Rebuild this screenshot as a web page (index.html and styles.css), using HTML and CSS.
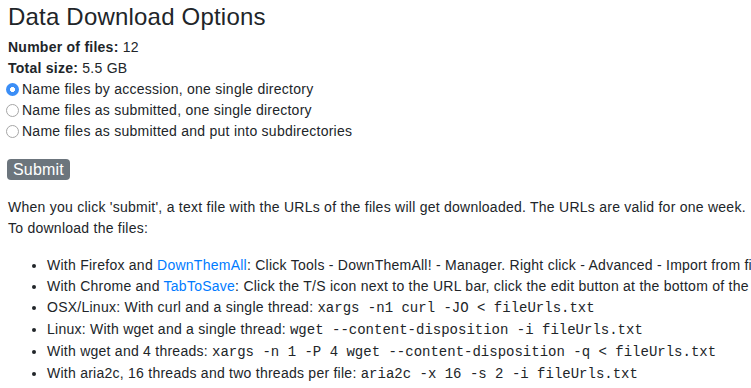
FILE: index.html
```html
<!DOCTYPE html>
<html>
<head>
  <title>Data Download Options</title>
  <link rel="stylesheet" href="styles.css">
</head>
<body>
  <div class="page">
    <h1 class="title">Data Download Options</h1>
    <form class="options">
      <div class="stat"><b>Number of files:</b> 12</div>
      <div class="stat"><b>Total size:</b> 5.5 GB</div>
      <label class="choice"><input type="radio" name="naming" value="acc" checked>Name files by accession, one single directory</label>
      <label class="choice"><input type="radio" name="naming" value="sub">Name files as submitted, one single directory</label>
      <label class="choice"><input type="radio" name="naming" value="subdir">Name files as submitted and put into subdirectories</label>
      <button type="button" class="submit">Submit</button>
    </form>
    <p class="note">When you click 'submit', a text file with the URLs of the files will get downloaded. The URLs are valid for one week.<br>To download the files:</p>
    <ul class="howto">
      <li>With Firefox and <a href="#">DownThemAll</a>: Click Tools - DownThemAll! - Manager. Right click - Advanced - Import from file</li>
      <li>With Chrome and <a href="#">TabToSave</a>: Click the T/S icon next to the URL bar, click the edit button at the bottom of the popup</li>
      <li>OSX/Linux: With curl and a single thread: <code>xargs -n1 curl -JO &lt; fileUrls.txt</code></li>
      <li>Linux: With wget and a single thread: <code>wget --content-disposition -i fileUrls.txt</code></li>
      <li>With wget and 4 threads: <code>xargs -n 1 -P 4 wget --content-disposition -q &lt; fileUrls.txt</code></li>
      <li>With aria2c, 16 threads and two threads per file: <code>aria2c -x 16 -s 2 -i fileUrls.txt</code></li>
    </ul>
  </div>
</body>
</html>
```

FILE: styles.css
```css
html, body {
  margin: 0;
  overflow: hidden;
}
body {
  font-family: "Liberation Sans", Arial, sans-serif;
  font-size: 14px;
  line-height: 21px;
  letter-spacing: 0.25px;
  color: #212529;
  background: #fff;
}
.page {
  padding: 0 8px;
  white-space: nowrap;
}
.title {
  font-size: 24px;
  font-weight: normal;
  line-height: 34px;
  letter-spacing: 0.2px;
  margin: 0 0 3px;
}
.options {
  display: flex;
  flex-direction: column;
  align-items: flex-start;
}
.stat b {
  font-weight: bold;
}
.choice {
  display: flex;
  align-items: center;
}
.choice input {
  appearance: none;
  width: 13px;
  height: 13px;
  margin: 0 3px 0 -2px;
  border: 1px solid #a6a6a6;
  border-radius: 50%;
  background: #fff;
  box-sizing: border-box;
}
.choice input:checked {
  border: none;
  background: radial-gradient(circle, #fff 0 2.2px, #3b8ef6 2.8px);
}
.submit {
  margin: 17px 0 0 -1px;
  padding: 0 6px;
  height: 21px;
  font-family: inherit;
  font-size: 16px;
  line-height: 21px;
  letter-spacing: 0.2px;
  color: #fff;
  background: #6c757d;
  border: none;
  border-radius: 4px;
}
.note {
  margin: 17px 0 16px;
}
.howto {
  margin: 0;
  padding-left: 39px;
}
a {
  color: #007bff;
  text-decoration: none;
}
code {
  font-family: "Liberation Mono", "Courier New", monospace;
  font-size: 14px;
  letter-spacing: 0;
  color: #212529;
}
```
